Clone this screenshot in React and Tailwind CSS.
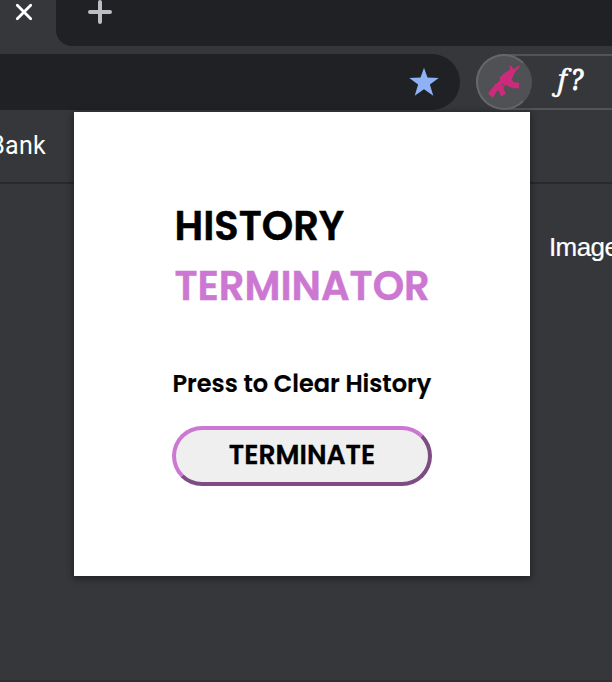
function TabStrip() {
  return (
    <div className="flex h-[46px] shrink-0">
      <div className="flex w-14 shrink-0 pt-[3px] pl-[15px]">
        <svg width="18" height="18" viewBox="0 0 18 18" fill="none" stroke="#fff" strokeWidth="2.8" strokeLinecap="round">
          <path d="M2.3 2.3 15.7 15.7M15.7 2.3 2.3 15.7" />
        </svg>
      </div>
      <div className="flex-1 rounded-bl-[16px] bg-[#202124] pl-8">
        <svg width="24" height="24" viewBox="0 0 24 24" fill="none" stroke="#bdbdc4" strokeWidth="4" strokeLinecap="round">
          <path d="M12 2V22M2 12H22" />
        </svg>
      </div>
    </div>
  );
}

function RifleIcon() {
  return (
    <svg className="shrink-0" width="36" height="36" viewBox="0 0 36 36" fill="#cd2a7b">
      <path d="M2 29.4 9.3 20 10.8 19.6 14 16 13.8 13.6 19.8 7.8 22 7.2 24.3 5 23.4 2.2 25.2 1.6 26.8 4.8 29 4.6 32.8 1.4 34 2.6 29.8 7.2 28.2 9.6 26.4 13.4 25.8 15.8 28 18.2 33.2 18.8 33 24.4C28.4 24.4 23.4 23.8 19.8 20.8L18.4 22 17.6 24.4 19.8 29.8 15 32.4 12.8 26.4 11.4 26.6 6.6 34Z" />
      <circle cx="16.6" cy="20.8" r="0.8" fill="#505154" />
    </svg>
  );
}

function Toolbar() {
  return (
    <div className="flex h-[66px] shrink-0 pt-2">
      <div className="flex h-14 w-[460px] shrink-0 items-center justify-end rounded-r-full bg-[#202124] pr-[21px]">
        <svg width="30" height="30" viewBox="0 0 30 30" fill="#8eb2f5">
          <path d="M15 .8 18.5 10.6 29.7 11 20.9 17.6 24.3 28.8 15 22.3 5.7 28.8 9.1 17.6.3 11 11.5 10.6Z" />
        </svg>
      </div>
      <div className="ml-4 flex h-14 flex-1 rounded-l-full border-y-2 border-l-2 border-[#535457]">
        <div className="-my-[2px] -ml-[2px] flex h-14 w-14 shrink-0 items-center justify-center rounded-full border-2 border-[#66676a] border-r-[#505154] bg-[#505154]">
          <RifleIcon />
        </div>
        <div className="flex pl-[23px] pt-[3px] font-['Noto_Serif','Liberation_Serif',serif] text-[29px] leading-[40px] text-white italic [-webkit-text-stroke:0.4px_white]">
          <span className="w-[15px]">ƒ</span>
          <span className="[-webkit-text-stroke:0.9px_white]">
            <span className="inline-block origin-left scale-x-[0.88]">?</span>
          </span>
        </div>
      </div>
    </div>
  );
}

function Popup() {
  return (
    <main className="absolute top-[112px] left-[74px] flex h-[464px] w-[456px] flex-col items-center bg-white font-['Poppins',sans-serif] font-semibold whitespace-nowrap text-black shadow-[0_2px_7px_1px_rgba(0,0,0,0.4)]">
      <h1 className="mt-[84px] w-[255px] text-[40px] leading-[60px] [-webkit-text-stroke:0.5px_currentColor]">
        <span className="block">HISTORY</span>
        <span className="block text-[#cc78d2] [-webkit-text-stroke:0.5px_#cc78d2]">TERMINATOR</span>
      </h1>
      <p className="mt-[50px] w-[259px] text-[24px] leading-9 [-webkit-text-stroke:0.2px_black]">Press to Clear History</p>
      <button className="mt-6 flex h-[60px] w-[260px] items-center justify-center rounded-full border-4 border-t-[#cc78d2] border-r-[#7d4c82] border-b-[#7d4c82] border-l-[#cc78d2] bg-[#efefef] pb-[1px] text-[26.67px] leading-none [-webkit-text-stroke:0.3px_black]">
        TERMINATE
      </button>
    </main>
  );
}

export default function App() {
  return (
    <div className="relative flex h-[682px] w-[612px] flex-col overflow-hidden bg-[#36373a] font-['Liberation_Sans',Arial,sans-serif] text-white">
      <TabStrip />
      <Toolbar />
      <div className="flex h-[72px] shrink-0 justify-start border-b-2 border-[#29292b]">
        <div className="flex w-[46px] justify-end pt-[18px] font-['Roboto',sans-serif] text-[25px] leading-8 tracking-[0.3px]">
          Bank
        </div>
      </div>
      <div className="flex flex-1 justify-end border-b-2 border-[#302e30] pt-[47px]">
        <span className="w-[65px] pl-0.5 text-[26px] leading-8 tracking-[-0.6px] whitespace-nowrap [-webkit-text-stroke:0.2px_white]">Images</span>
      </div>
      <Popup />
    </div>
  );
}
